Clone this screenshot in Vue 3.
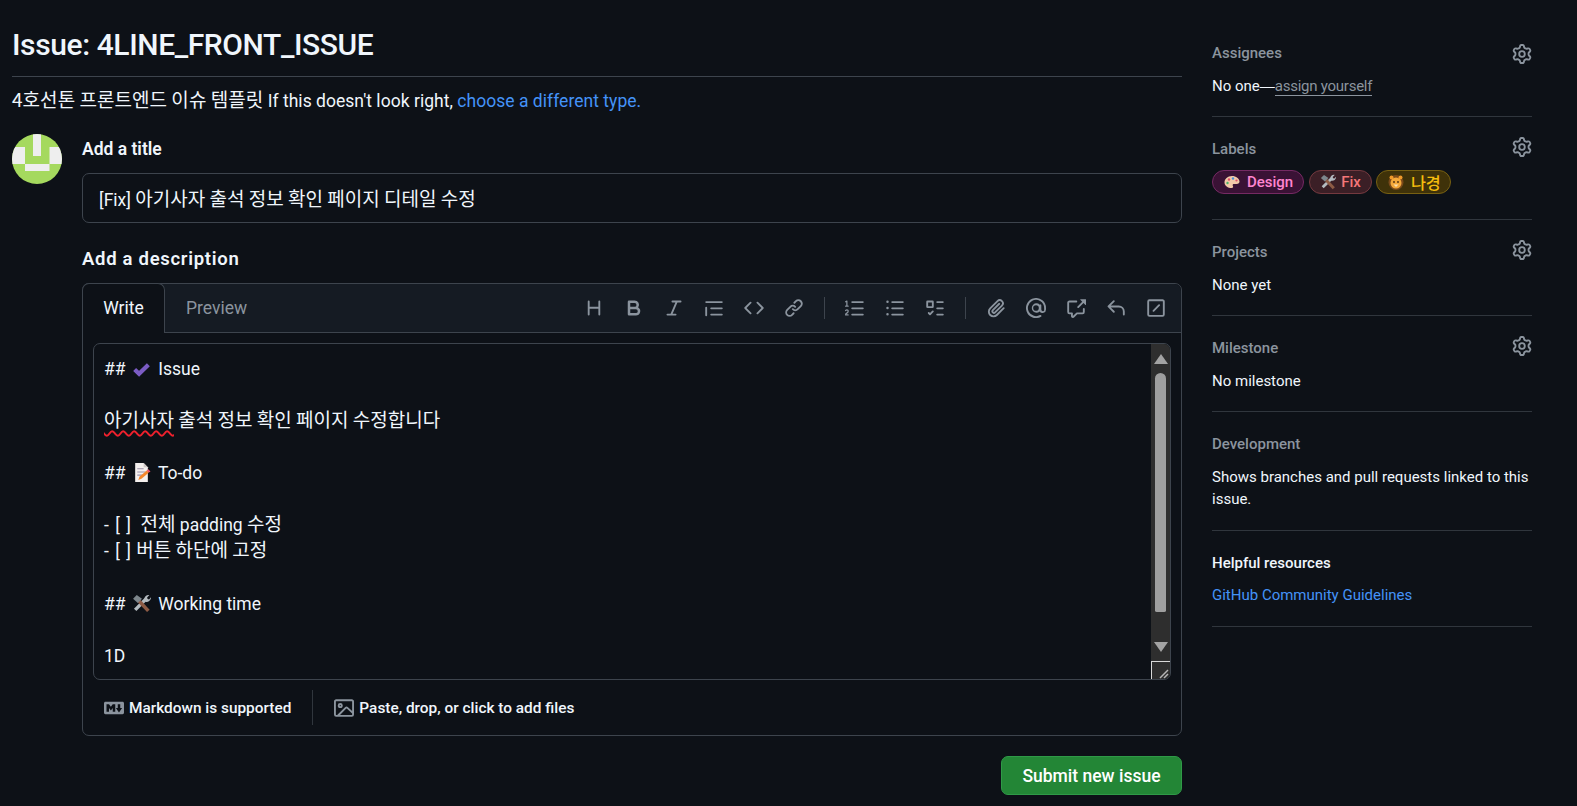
<template>
  <div class="page">
    <main class="main">
      <h1 class="title">Issue: 4LINE_FRONT_ISSUE</h1>
      <p class="subtitle"><span class="ko">4호선톤 프론트엔드 이슈 템플릿</span> If this doesn't look right, <a class="link">choose a different type.</a></p>

      <div class="form-row">
        <svg class="avatar" viewBox="0 0 50 50">
          <rect width="50" height="50" fill="#a5d95e" />
          <path d="M21 0h8v22h-8zM0 13h13v17H0zM37.5 13H50v17H37.5zM13 30h24.5v7H13z" fill="#eeeeee" />
        </svg>

        <div class="form">
          <label class="field-label">Add a title</label>
          <div class="title-input">[Fix] <span class="ko">아기사자 출석 정보 확인 페이지 디테일 수정</span></div>

          <label class="field-label desc-label">Add a description</label>
          <div class="editor">
            <div class="editor-head">
              <div class="tab active">Write</div>
              <div class="tab">Preview</div>
              <div class="toolbar">
                <template v-for="(item, i) in toolbar" :key="i">
                  <span v-if="item === 'sep'" class="tool-sep"></span>
                  <svg v-else class="tool" viewBox="0 0 16 16"><path :d="item" fill-rule="evenodd" /></svg>
                </template>
              </div>
            </div>

            <div class="editor-body">
              <div class="textarea">
                <div class="lines">
                  <div class="line">## <svg class="emoji" viewBox="0 0 18 18"><path d="M2.5 10l4.2 4L15.5 5.5" fill="none" stroke="#7b5cc4" stroke-width="4" /></svg> Issue</div>
                  <div class="line mt24"><span class="ko"><span class="typo">아기사자</span> 출석 정보 확인 페이지 수정합니다</span></div>
                  <div class="line mt28">## <svg class="emoji" viewBox="0 0 18 18"><path d="M3 0h8l4 4v14H3z" fill="#f4f0ee" /><path d="M11 0l4 4h-4z" fill="#cfc8c6" /><path d="M5 5h6v1H5zM5 8h8v1H5zM5 11h5v1H5z" fill="#9a8fa8" /><path d="M6 16l1-3 7-6 2 2-7 6z" fill="#f5872b" /><path d="M14 7l1.5-1 2 2-1.5 1z" fill="#f4506e" /></svg> To-do</div>
                  <div class="line mt24"><span class="brk">- [ ]</span>&nbsp;&nbsp;<span class="ko">전체</span> padding <span class="ko">수정</span></div>
                  <div class="line short"><span class="brk">- [ ]</span> <span class="ko">버튼 하단에 고정</span></div>
                  <div class="line mt30">## <svg class="emoji" viewBox="0 0 18 18" v-html="toolsIcon"></svg> Working time</div>
                  <div class="line mt26">1D</div>
                </div>
              </div>
              <div class="scrollbar">
                <span class="arrow up"></span>
                <span class="thumb"></span>
                <span class="arrow down"></span>
                <span class="corner">
                  <svg viewBox="0 0 18 18" width="18" height="18"><path d="M8 16l8-8M12 16l4-4" stroke="#b5b5b5" stroke-width="1.5" /></svg>
                </span>
              </div>
            </div>

            <div class="editor-foot">
              <span class="foot-item">
                <svg class="foot-icon" viewBox="0 0 16 16"><path :d="icons.markdown" fill-rule="evenodd" /></svg>
                Markdown is supported
              </span>
              <span class="foot-sep"></span>
              <span class="foot-item">
                <svg class="foot-icon" viewBox="0 0 16 16"><path :d="icons.image" fill-rule="evenodd" /></svg>
                Paste, drop, or click to add files
              </span>
            </div>
          </div>

          <div class="actions">
            <button class="submit">Submit new issue</button>
          </div>
        </div>
      </div>
    </main>

    <aside class="sidebar">
      <section class="side first">
        <div class="side-head"><span>Assignees</span><svg class="gear" viewBox="0 0 16 16"><path :d="icons.gear" fill-rule="evenodd" /></svg></div>
        <div class="side-value">No one<span class="dash">—</span><a class="assign">assign yourself</a></div>
      </section>
      <section class="side labels">
        <div class="side-head"><span>Labels</span><svg class="gear" viewBox="0 0 16 16"><path :d="icons.gear" fill-rule="evenodd" /></svg></div>
        <div class="chips">
          <span class="chip design">
            <svg class="chip-emoji" viewBox="0 0 16 16"><path d="M8 2C3.5 2 .5 5 .5 8.5S4 14 7.5 14c2 0 1.8-1.5 1.3-2.3-.5-1 .2-1.7 1.2-1.7h2.5c2 0 3-1 3-2.5C15.500 4.500 12 2 8 2z" fill="#f2c9a8" /><circle cx="5" cy="5.5" r="1.2" fill="#e0506a" /><circle cx="9" cy="4.5" r="1.2" fill="#4a90d9" /><circle cx="3.5" cy="9" r="1.2" fill="#4ab56a" /><circle cx="12.5" cy="6.5" r="1.1" fill="#e0506a" /></svg>
            Design
          </span>
          <span class="chip fix"><svg class="chip-emoji" viewBox="0 0 18 18" v-html="toolsIcon"></svg> Fix</span>
          <span class="chip lion">
            <svg class="chip-emoji" viewBox="0 0 16 16"><circle cx="8" cy="8.5" r="7.5" fill="#7a4a1a" /><circle cx="3.5" cy="3.5" r="2" fill="#f09a2a" /><circle cx="12.5" cy="3.5" r="2" fill="#f09a2a" /><circle cx="8" cy="9" r="5.5" fill="#f5a93a" /><circle cx="6" cy="8" r=".9" fill="#4a2c10" /><circle cx="10" cy="8" r=".9" fill="#4a2c10" /><path d="M5.5 10.5h5L8 13z" fill="#fbe0b0" /></svg>
            <span class="ko">나경</span>
          </span>
        </div>
      </section>
      <section class="side">
        <div class="side-head"><span>Projects</span><svg class="gear" viewBox="0 0 16 16"><path :d="icons.gear" fill-rule="evenodd" /></svg></div>
        <div class="side-value">None yet</div>
      </section>
      <section class="side">
        <div class="side-head"><span>Milestone</span><svg class="gear" viewBox="0 0 16 16"><path :d="icons.gear" fill-rule="evenodd" /></svg></div>
        <div class="side-value">No milestone</div>
      </section>
      <section class="side">
        <div class="side-head"><span>Development</span></div>
        <div class="side-value dev">Shows branches and pull requests linked to this issue.</div>
      </section>
      <section class="side last">
        <div class="helpful">Helpful resources</div>
        <a class="link side-link">GitHub Community Guidelines</a>
      </section>
    </aside>
  </div>
</template>

<script setup>
const icons = {
  gear: 'M8 0a8.2 8.2 0 0 1 .701.031C9.444.095 9.99.645 10.16 1.29l.288 1.107c.018.066.079.158.212.224.231.114.454.243.668.386.123.082.233.09.299.071l1.103-.303c.644-.176 1.392.021 1.82.63.27.385.506.792.704 1.218.315.675.111 1.422-.364 1.891l-.814.806c-.049.048-.098.147-.088.294.016.257.016.515 0 .772-.01.147.038.246.088.294l.814.806c.475.469.679 1.216.364 1.891a7.977 7.977 0 0 1-.704 1.217c-.428.61-1.176.807-1.82.63l-1.102-.302c-.067-.019-.177-.011-.3.071a5.909 5.909 0 0 1-.668.386c-.133.066-.194.158-.211.224l-.29 1.106c-.168.646-.715 1.196-1.458 1.26a8.006 8.006 0 0 1-1.402 0c-.743-.064-1.289-.614-1.458-1.26l-.289-1.106c-.018-.066-.079-.158-.212-.224a5.738 5.738 0 0 1-.668-.386c-.123-.082-.233-.09-.299-.071l-1.103.303c-.644.176-1.392-.021-1.82-.63a8.12 8.12 0 0 1-.704-1.218c-.315-.675-.111-1.422.363-1.891l.815-.806c.05-.048.098-.147.088-.294a6.214 6.214 0 0 1 0-.772c.01-.147-.038-.246-.088-.294l-.815-.806C.635 6.045.431 5.298.746 4.623a7.92 7.92 0 0 1 .704-1.217c.428-.61 1.176-.807 1.82-.63l1.102.302c.067.019.177.011.3-.071.214-.143.437-.272.668-.386.133-.066.194-.158.211-.224l.29-1.106C6.009.645 6.556.095 7.299.03 7.53.01 7.764 0 8 0Zm-.571 1.525c-.036.003-.108.036-.137.146l-.289 1.105c-.147.561-.549.967-.998 1.189-.173.086-.34.183-.5.29-.417.278-.97.423-1.529.27l-1.103-.303c-.109-.03-.175.016-.195.045-.22.312-.412.644-.573.99-.014.031-.021.11.059.19l.815.806c.411.406.562.957.53 1.456a4.709 4.709 0 0 0 0 .582c.032.499-.119 1.05-.53 1.456l-.815.806c-.081.08-.073.159-.059.19.162.346.353.677.573.989.02.03.085.076.195.046l1.102-.303c.56-.153 1.113-.008 1.53.27.161.107.328.204.501.29.447.222.85.629.997 1.189l.289 1.105c.029.109.101.143.137.146a6.6 6.6 0 0 0 1.142 0c.036-.003.108-.036.137-.146l.289-1.105c.147-.561.549-.967.998-1.189.173-.086.34-.183.5-.29.417-.278.97-.423 1.529-.27l1.103.303c.109.029.175-.016.195-.045.22-.313.411-.644.573-.99.014-.031.021-.11-.059-.19l-.815-.806c-.411-.406-.562-.957-.53-1.456a4.709 4.709 0 0 0 0-.582c-.032-.499.119-1.05.53-1.456l.815-.806c.081-.08.073-.159.059-.19a6.464 6.464 0 0 0-.573-.989c-.02-.03-.085-.076-.195-.046l-1.102.303c-.56.153-1.113.008-1.53-.27a4.44 4.44 0 0 0-.501-.29c-.447-.222-.85-.629-.997-1.189l-.289-1.105c-.029-.11-.101-.143-.137-.146a6.6 6.6 0 0 0-1.142 0ZM11 8a3 3 0 1 1-6 0 3 3 0 0 1 6 0ZM9.5 8a1.5 1.5 0 1 0-3.001.001A1.5 1.5 0 0 0 9.5 8Z',
  markdown: 'M14.85 3c.63 0 1.15.52 1.14 1.15v7.7c0 .63-.51 1.15-1.15 1.15H1.15C.52 13 0 12.48 0 11.84V4.15C0 3.52.52 3 1.15 3ZM9 11V5H7L5.5 7 4 5H2v6h2V8l1.5 1.92L7 8v3Zm2.99.5L14.5 8H13V5h-2v3H9.5Z',
  image: 'M16 13.25A1.75 1.75 0 0 1 14.25 15H1.75A1.75 1.75 0 0 1 0 13.25V2.75C0 1.784.784 1 1.75 1h12.5c.966 0 1.75.784 1.75 1.75ZM1.75 2.5a.25.25 0 0 0-.25.25v10.5c0 .138.112.25.25.25h.94l.03-.03 6.077-6.078a1.75 1.75 0 0 1 2.412-.06L14.5 10.31V2.75a.25.25 0 0 0-.25-.25Zm12.5 11a.25.25 0 0 0 .25-.25v-.917l-4.298-3.889a.25.25 0 0 0-.344.009L4.81 13.5ZM7 6a2 2 0 1 1-3.999.001A2 2 0 0 1 7 6ZM5.5 6a.5.5 0 1 0-1 0 .5.5 0 0 0 1 0Z',
}

const toolsIcon = '<path d="M3 15l10-10" stroke="#b4bbc0" stroke-width="3.2"/><path d="M11.5 5c0-2.5 2.5-4.5 5-4l-2.2 2.3.5 1.4 1.4.5L18 3c.3 2.8-2.5 5-5 4.5z" fill="#b4bbc0"/><path d="M6 6l9.5 10" stroke="#8d5b45" stroke-width="3.4"/><path d="M1 4.5L4.5 1l5 3.5-4 4z" fill="#7d868c"/>'

const toolbar = [
  'M3.75 2a.75.75 0 0 1 .75.75V7h7V2.75a.75.75 0 0 1 1.5 0v10.5a.75.75 0 0 1-1.5 0V8.5h-7v4.75a.75.75 0 0 1-1.5 0V2.75A.75.75 0 0 1 3.75 2Z',
  'M4 2h4.5a3.501 3.501 0 0 1 2.852 5.53A3.499 3.499 0 0 1 9.5 14H4a1 1 0 0 1-1-1V3a1 1 0 0 1 1-1Zm1 7v3h4.5a1.5 1.5 0 0 0 0-3Zm3.5-2a1.5 1.5 0 0 0 0-3H5v3Z',
  'M6 2.75A.75.75 0 0 1 6.75 2h6.5a.75.75 0 0 1 0 1.5h-2.505l-3.858 9H9.25a.75.75 0 0 1 0 1.5h-6.5a.75.75 0 0 1 0-1.5h2.505l3.858-9H6.75A.75.75 0 0 1 6 2.75Z',
  'M1.75 2.5h12.5a.75.75 0 0 1 0 1.5H1.75a.75.75 0 0 1 0-1.5Zm4 5h8.5a.75.75 0 0 1 0 1.5h-8.5a.75.75 0 0 1 0-1.5Zm0 5h8.5a.75.75 0 0 1 0 1.5h-8.5a.75.75 0 0 1 0-1.5ZM2.5 7.75v6a.75.75 0 0 1-1.5 0v-6a.75.75 0 0 1 1.5 0Z',
  'm11.28 3.22 4.25 4.25a.75.75 0 0 1 0 1.06l-4.25 4.25a.749.749 0 0 1-1.275-.326.749.749 0 0 1 .215-.734L13.94 8l-3.72-3.72a.749.749 0 0 1 .326-1.275.749.749 0 0 1 .734.215Zm-6.56 0a.751.751 0 0 1 1.042.018.751.751 0 0 1 .018 1.042L2.06 8l3.72 3.72a.749.749 0 0 1-.326 1.275.749.749 0 0 1-.734-.215L.47 8.53a.75.75 0 0 1 0-1.06Z',
  'm7.775 3.275 1.25-1.25a3.5 3.5 0 1 1 4.95 4.95l-2.5 2.5a3.5 3.5 0 0 1-4.95 0 .751.751 0 0 1 .018-1.042.751.751 0 0 1 1.042-.018 1.998 1.998 0 0 0 2.83 0l2.5-2.5a2.002 2.002 0 0 0-2.83-2.83l-1.25 1.25a.751.751 0 0 1-1.042-.018.751.751 0 0 1-.018-1.042Zm-4.69 9.64a1.998 1.998 0 0 0 2.83 0l1.25-1.25a.751.751 0 0 1 1.042.018.751.751 0 0 1 .018 1.042l-1.25 1.25a3.5 3.5 0 1 1-4.95-4.95l2.5-2.5a3.5 3.5 0 0 1 4.95 0 .751.751 0 0 1-.018 1.042.751.751 0 0 1-1.042.018 1.998 1.998 0 0 0-2.83 0l-2.5 2.5a1.998 1.998 0 0 0 0 2.83Z',
  'sep',
  'M5 3.25a.75.75 0 0 1 .75-.75h8.5a.75.75 0 0 1 0 1.5h-8.5A.75.75 0 0 1 5 3.25Zm0 5a.75.75 0 0 1 .75-.75h8.5a.75.75 0 0 1 0 1.5h-8.5A.75.75 0 0 1 5 8.25Zm0 5a.75.75 0 0 1 .75-.75h8.5a.75.75 0 0 1 0 1.5h-8.5a.75.75 0 0 1-.75-.75ZM.924 10.32a.5.5 0 0 1-.851-.525l.001-.001.001-.002.002-.004.007-.011c.097-.144.215-.273.348-.384.228-.19.588-.392 1.068-.392.468 0 .858.181 1.126.484.259.294.377.673.377 1.038 0 .987-.686 1.495-1.156 1.845l-.047.035c-.303.225-.522.4-.654.597h1.357a.5.5 0 0 1 0 1H.5a.5.5 0 0 1-.5-.5c0-1.005.692-1.52 1.167-1.875l.035-.025c.531-.396.8-.625.8-1.078a.57.57 0 0 0-.128-.376C1.806 10.068 1.695 10 1.5 10a.658.658 0 0 0-.429.163.835.835 0 0 0-.144.153ZM2.003 2.5V6h.503a.5.5 0 0 1 0 1H.5a.5.5 0 0 1 0-1h.503V3.308l-.28.14a.5.5 0 0 1-.446-.895l1.003-.5a.5.5 0 0 1 .723.447Z',
  'M5.75 2.5h8.5a.75.75 0 0 1 0 1.5h-8.5a.75.75 0 0 1 0-1.5Zm0 5h8.5a.75.75 0 0 1 0 1.5h-8.5a.75.75 0 0 1 0-1.5Zm0 5h8.5a.75.75 0 0 1 0 1.5h-8.5a.75.75 0 0 1 0-1.5ZM2 14a1 1 0 1 1 0-2 1 1 0 0 1 0 2Zm1-6a1 1 0 1 1-2 0 1 1 0 0 1 2 0ZM2 4a1 1 0 1 1 0-2 1 1 0 0 1 0 2Z',
  'M2 2h4a1 1 0 0 1 1 1v4a1 1 0 0 1-1 1H2a1 1 0 0 1-1-1V3a1 1 0 0 1 1-1Zm.5 1.5v3h3v-3ZM9.75 2.5h4.5a.75.75 0 0 1 0 1.5h-4.5a.75.75 0 0 1 0-1.5Zm0 5h4.5a.75.75 0 0 1 0 1.5h-4.5a.75.75 0 0 1 0-1.5Zm0 5h4.5a.75.75 0 0 1 0 1.5h-4.5a.75.75 0 0 1 0-1.5ZM6.78 10.22a.75.75 0 0 1 0 1.06l-2.25 2.25a.75.75 0 0 1-1.06 0l-1-1a.749.749 0 1 1 1.06-1.06l.47.47 1.72-1.72a.75.75 0 0 1 1.06 0Z',
  'sep',
  'M12.212 3.02a1.753 1.753 0 0 0-2.478.003l-5.83 5.83a3.007 3.007 0 0 0-.88 2.127c0 .795.315 1.551.88 2.116a2.99 2.99 0 0 0 2.116.88c.795 0 1.56-.315 2.127-.88l5.48-5.48a.75.75 0 0 1 1.06 1.06l-5.48 5.48a4.5 4.5 0 0 1-6.364-6.364l5.83-5.83a3.25 3.25 0 0 1 4.6 4.6l-5.48 5.48a2 2 0 0 1-2.83-2.83l5.13-5.13a.75.75 0 0 1 1.06 1.06l-5.13 5.13a.5.5 0 0 0 .71.71l5.48-5.48a1.75 1.75 0 0 0-.001-2.482Z',
  'M4.75 2.37a6.5 6.5 0 0 0 6.5 11.26.75.75 0 0 1 .75 1.298A8 8 0 1 1 16 8v1.25a2.75 2.75 0 0 1-5.07 1.47A3.75 3.75 0 1 1 11 5.3a.75.75 0 0 1 1.25.55v3.4a1.25 1.25 0 0 0 2.25.75V8a6.5 6.5 0 0 0-9.75-5.63ZM10.25 8a2.25 2.25 0 1 0-4.5 0 2.25 2.25 0 0 0 4.5 0Z',
  'M2.75 3.5a.25.25 0 0 0-.25.25v7.5c0 .138.112.25.25.25h2a.75.75 0 0 1 .75.75v2.19l2.72-2.72a.749.749 0 0 1 .53-.22h4.5a.25.25 0 0 0 .25-.25v-2.5a.75.75 0 0 1 1.5 0v2.5A1.75 1.75 0 0 1 13.25 13H9.06l-2.573 2.573A1.458 1.458 0 0 1 4 14.543V13H2.75A1.75 1.75 0 0 1 1 11.25v-7.5C1 2.784 1.784 2 2.75 2h5.5a.75.75 0 0 1 0 1.5ZM16 1.25v4.146a.25.25 0 0 1-.427.177L14.03 4.03l-3.75 3.75a.749.749 0 0 1-1.275-.326.749.749 0 0 1 .215-.734l3.75-3.75-1.543-1.543A.25.25 0 0 1 11.604 1h4.146a.25.25 0 0 1 .25.25Z',
  'M6.78 1.97a.75.75 0 0 1 0 1.06L3.81 6h6.44A4.75 4.75 0 0 1 15 10.75v2.5a.75.75 0 0 1-1.5 0v-2.5a3.25 3.25 0 0 0-3.25-3.25H3.81l2.97 2.97a.749.749 0 0 1-.326 1.275.749.749 0 0 1-.734-.215L1.47 7.28a.75.75 0 0 1 0-1.06l4.25-4.25a.75.75 0 0 1 1.06 0Z',
  'M1 2.75A1.75 1.75 0 0 1 2.75 1h10.5c.966 0 1.75.784 1.75 1.75v10.5A1.75 1.75 0 0 1 13.25 15H2.75A1.75 1.75 0 0 1 1 13.25Zm1.75-.25a.25.25 0 0 0-.25.25v10.5c0 .138.112.25.25.25h10.5a.25.25 0 0 0 .25-.25V2.75a.25.25 0 0 0-.25-.25ZM9.97 5.22l-4.5 4.5a.749.749 0 1 0 1.06 1.06l4.5-4.5a.749.749 0 1 0-1.06-1.06Z',
]
</script>

<style>
html,
body {
  margin: 0;
  background: #0d1117;
  overflow: hidden;
}
</style>

<style scoped>
.page {
  display: flex;
  gap: 30px;
  height: 806px;
  padding: 0 45px 0 12px;
  box-sizing: border-box;
  overflow: hidden;
  background: #0d1117;
  color: #f0f6fc;
  font-family: Roboto, "Noto Sans CJK KR", sans-serif;
  font-size: 15px;
}

.main {
  width: 1170px;
  flex: none;
}

.ko {
  font-family: "Noto Sans CJK KR", sans-serif;
  font-size: 1.087em;
}

.title {
  margin: 0;
  padding-top: 25px;
  height: 51px;
  border-bottom: 1px solid #3d444d;
  font-size: 30px;
  line-height: 40px;
  font-weight: 500;
  letter-spacing: -0.4px;
}

.subtitle {
  margin: 0;
  padding-top: 10px;
  height: 46px;
  font-size: 17.5px;
  line-height: 24px;
  letter-spacing: 0.03px;
}

.link {
  color: #4493f8;
}

.form-row {
  display: flex;
  gap: 20px;
}

.avatar {
  width: 50px;
  height: 50px;
  margin-top: 1px;
  border-radius: 50%;
  flex: none;
}

.form {
  flex: 1;
  min-width: 0;
}

.field-label {
  display: block;
  height: 24px;
  padding-top: 4px;
  font-size: 17.5px;
  line-height: 24px;
  font-weight: 600;
}

.title-input {
  margin-top: 12px;
  height: 50px;
  padding: 0 16px;
  box-sizing: border-box;
  border: 1px solid #3d444d;
  border-radius: 7px;
  font-size: 17.5px;
  line-height: 48px;
}

.desc-label {
  margin-top: 20px;
  font-size: 18.5px;
  letter-spacing: 0.7px;
}

.editor {
  margin-top: 12px;
  height: 453px;
  box-sizing: border-box;
  border: 1px solid #3d444d;
  border-radius: 7px;
  display: flex;
  flex-direction: column;
}

.editor-head {
  display: flex;
  height: 48px;
  flex: none;
  background: #151b23;
  border-bottom: 1px solid #3d444d;
  border-radius: 7px 7px 0 0;
}

.tab {
  padding: 0 21px;
  line-height: 48px;
  font-size: 17.5px;
  color: #8b949e;
}

.tab.active {
  width: 83px;
  box-sizing: border-box;
  height: 50px;
  margin: -1px 0 -1px -1px;
  background: #0d1117;
  border: 1px solid #3d444d;
  border-bottom: none;
  border-radius: 7px 7px 0 0;
  color: #f0f6fc;
  text-align: center;
  padding: 0;
}

.toolbar {
  margin-left: auto;
  display: flex;
  align-items: center;
  gap: 20px;
  padding-right: 15px;
}

.tool {
  width: 20px;
  height: 20px;
  fill: #8b949e;
}

.tool-sep {
  width: 1px;
  height: 22px;
  background: #3d444d;
}

.editor-body {
  display: flex;
  height: 335px;
  margin: 10px 10px 0;
  border: 1px solid #3d444d;
  border-radius: 7px;
  overflow: hidden;
  flex: none;
}

.textarea {
  flex: 1;
  padding: 12px 10px 0;
  font-size: 17.5px;
}

.lines {
  display: flex;
  flex-direction: column;
}

.line {
  height: 26px;
  line-height: 26px;
  white-space: pre-wrap;
}

.mt24 { margin-top: 24px; }
.mt26 { margin-top: 26px; }
.mt28 { margin-top: 28px; }
.mt30 { margin-top: 30px; }

.short {
  height: 25px;
}

.brk {
  letter-spacing: 1px;
}

.typo {
  text-decoration: underline wavy #f0202c 1.5px;
  text-underline-offset: 3px;
}

.emoji {
  width: 19px;
  height: 19px;
  vertical-align: -3px;
  margin: 0 2.5px;
}

.scrollbar {
  flex: none;
  width: 19px;
  background: #2e2e2e;
  display: flex;
  flex-direction: column;
  align-items: center;
}

.arrow {
  width: 0;
  height: 0;
  border-left: 7px solid transparent;
  border-right: 7px solid transparent;
  flex: none;
}

.arrow.up {
  margin-top: 10px;
  border-bottom: 10px solid #a3a3a3;
}

.arrow.down {
  margin-top: 30px;
  border-top: 10px solid #a3a3a3;
}

.thumb {
  width: 11px;
  height: 239px;
  margin-top: 9px;
  border-radius: 6px 6px 2px 2px;
  background: #9f9f9f;
  flex: none;
}

.corner {
  margin-top: 9px;
  width: 19px;
  height: 18px;
  box-sizing: border-box;
  border-top: 1px solid #d8d8d8;
  border-left: 1px solid #d8d8d8;
  display: flex;
}

.editor-foot {
  flex: 1;
  display: flex;
  align-items: center;
  padding-left: 21px;
  font-weight: 500;
  font-size: 15.4px;
}

.foot-item {
  display: flex;
  align-items: center;
  gap: 5px;
}

.foot-icon {
  width: 20px;
  height: 20px;
  fill: #8b949e;
}

.foot-sep {
  width: 1px;
  height: 35px;
  margin: 0 21px;
  background: #30363d;
}

.actions {
  display: flex;
  justify-content: flex-end;
  margin-top: 20px;
}

.submit {
  width: 181px;
  height: 39px;
  border: 1px solid #2f9a47;
  border-radius: 7px;
  background: #238636;
  color: #fff;
  font-family: inherit;
  font-size: 17.5px;
  font-weight: 500;
}

.sidebar {
  width: 320px;
  flex: none;
  padding-top: 21px;
}

.side {
  padding: 22px 0 20px;
  border-bottom: 1px solid #30363d;
}

.side.last {
  padding-bottom: 21px;
}

.side-head {
  display: flex;
  justify-content: space-between;
  align-items: center;
  height: 20px;
  color: #8b949e;
  font-size: 15px;
  font-weight: 500;
  line-height: 20px;
}

.gear {
  width: 20px;
  height: 20px;
  fill: #8b949e;
  margin-top: -4px;
}

.first .gear {
  margin-top: 2px;
}

.side-value {
  margin-top: 13px;
  line-height: 20px;
}

.dev {
  margin-top: 12px;
  line-height: 22px;
}

.dash {
  font-family: "Liberation Sans", sans-serif;
}

.assign {
  letter-spacing: -0.25px;
  color: #8b949e;
  border-bottom: 1px solid #8b949e;
}

.labels {
  padding-bottom: 25px;
}

.chips {
  display: flex;
  gap: 5px;
  margin-top: 11px;
}

.chip {
  display: flex;
  align-items: center;
  gap: 7px;
  height: 24px;
  padding: 0 10px 0 11px;
  box-sizing: border-box;
  border-radius: 12px;
  font-size: 15px;
  font-weight: 500;
}

.chip-emoji {
  width: 16px;
  height: 16px;
}

.design {
  background: #3a1235;
  border: 1px solid #752a63;
  color: #ff85d0;
}

.fix {
  gap: 5px;
  padding: 0 10px;
  background: #3b1f26;
  border: 1px solid #74393f;
  color: #f47678;
}

.lion {
  margin-left: -1px;
  padding-right: 9px;
  background: #3f3209;
  border: 1px solid #776012;
  color: #f5bd0e;
}

.helpful {
  font-weight: 500;
  line-height: 20px;
}

.side-link {
  display: block;
  margin-top: 12px;
  line-height: 20px;
}
</style>
